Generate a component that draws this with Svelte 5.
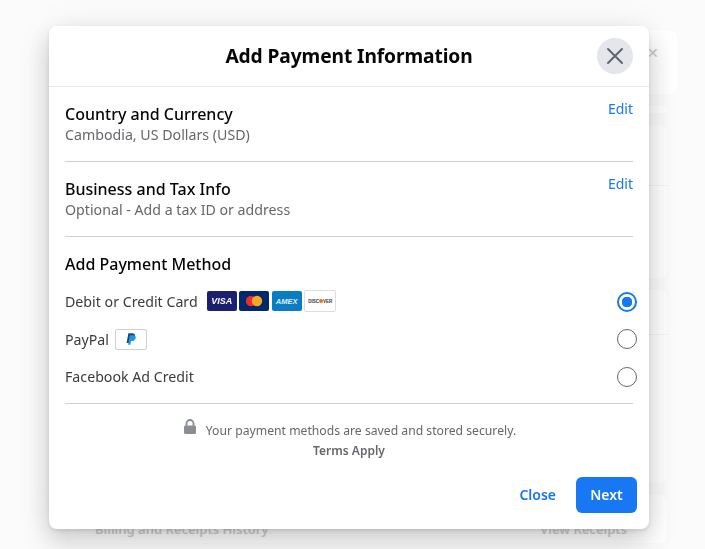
<script>
    const methods = [
        { id: "card", label: "Debit or Credit Card", kind: "cards" },
        { id: "paypal", label: "PayPal", kind: "paypal" },
        { id: "credit", label: "Facebook Ad Credit", kind: "" }
    ];
    let selected = $state("card");
</script>

<div class="page">
    <div class="notice"><span class="notice-x">✕</span></div>
    <div class="bg-card short"></div>
    <div class="bg-card first"><div class="bg-line"></div></div>
    <div class="bg-card second"><div class="bg-line"></div></div>
    <div class="bg-card last">
        <span>Billing and Receipts History</span>
        <span>View Receipts</span>
    </div>
</div>

<div class="overlay">
    <div class="dialog">
        <header>
            <h1>Add Payment Information</h1>
            <button class="close-x" aria-label="Close">
                <svg width="20" height="20" viewBox="0 0 20 20">
                    <path d="M3 3 L17 17 M17 3 L3 17" stroke="#606770" stroke-width="2" stroke-linecap="round" />
                </svg>
            </button>
        </header>

        <section class="info">
            <div>
                <h2>Country and Currency</h2>
                <p>Cambodia, US Dollars (USD)</p>
            </div>
            <a href="#edit">Edit</a>
        </section>

        <section class="info">
            <div>
                <h2>Business and Tax Info</h2>
                <p>Optional - Add a tax ID or address</p>
            </div>
            <a href="#edit">Edit</a>
        </section>

        <section class="methods">
            <h2>Add Payment Method</h2>
            {#each methods as m}
                <label class="method">
                    <span class="method-name">{m.label}</span>
                    {#if m.kind === "cards"}
                        <span class="logos">
                            <span class="logo visa">VISA</span>
                            <span class="logo mc">
                                <svg width="18" height="12" viewBox="0 0 18 12">
                                    <circle cx="6" cy="6" r="5.2" fill="#eb2d2f" />
                                    <circle cx="12" cy="6" r="5.2" fill="#f7a823" />
                                </svg>
                            </span>
                            <span class="logo amex">AMEX</span>
                            <span class="logo discover">DISC<i></i>VER</span>
                        </span>
                    {:else if m.kind === "paypal"}
                        <span class="logo paypal">
                            <svg width="10" height="12" viewBox="0 0 10 12">
                                <path d="M2.4 0.3 H6.2 C8.4 0.3 9.2 1.5 8.9 3.1 C8.5 5.2 7 6.3 5 6.3 H3.7 L3 10 H0.6 Z" fill="#253b80" />
                                <path d="M3.6 2.2 H7 C9 2.2 10 3.3 9.7 4.9 C9.3 7 7.8 8 5.8 8 H5 L4.4 11.7 H2.2 Z" fill="#179bd7" />
                            </svg>
                        </span>
                    {/if}
                    <input type="radio" name="method" value={m.id} bind:group={selected} />
                    <span class="radio" class:on={selected === m.id}></span>
                </label>
            {/each}
        </section>

        <div class="secure">
            <div class="secure-line">
                <svg class="lock" width="14" height="16" viewBox="0 0 14 16">
                    <path d="M3.5 7 V4.5 a3.5 3.5 0 0 1 7 0 V7" fill="none" stroke="#8a8d91" stroke-width="1.8" />
                    <rect x="1" y="6.5" width="12" height="8.5" rx="1.5" fill="#8a8d91" />
                </svg>
                <span>Your payment methods are saved and stored securely.</span>
            </div>
            <a href="#terms">Terms Apply</a>
        </div>

        <footer>
            <button class="text-btn">Close</button>
            <button class="next">Next</button>
        </footer>
    </div>
</div>

<style>
    :global(body) {
        margin: 0;
        background: #fbfbfb;
        overflow: hidden;
    }
    .page {
        width: 705px;
        height: 549px;
        box-sizing: border-box;
        padding: 30px 28px 0 70px;
        display: flex;
        flex-direction: column;
        overflow: hidden;
        font-family: "Noto Sans", sans-serif;
    }
    .notice {
        height: 64px;
        flex: none;
        background: #fff;
        border-radius: 8px;
        display: flex;
        justify-content: flex-end;
        align-items: center;
        padding: 0 18px 20px 0;
        box-sizing: border-box;
    }
    .notice-x {
        color: #c8c8c8;
        font-size: 14px;
    }
    .bg-card {
        flex: none;
        width: 597px;
        background: #fff;
        border-radius: 8px;
        margin-top: 12px;
        box-sizing: border-box;
    }
    .short {
        height: 7px;
        margin-top: 12px;
    }
    .first {
        height: 153px;
    }
    .second {
        height: 193px;
    }
    .bg-line {
        height: 1px;
        background: #f4f4f4;
        margin-top: 60px;
    }
    .second .bg-line {
        margin-top: 44px;
    }
    .last {
        height: 48px;
        display: flex;
        justify-content: space-between;
        align-items: flex-end;
        padding: 0 40px 5px 25px;
        color: #d0d0d0;
        font-size: 13px;
        font-weight: 600;
    }
    .overlay {
        position: fixed;
        inset: 0;
        padding: 26px 0 0 49px;
        box-sizing: border-box;
    }
    .dialog {
        width: 600px;
        height: 503px;
        background: #fff;
        border-radius: 8px;
        box-shadow: 0 12px 28px rgba(0, 0, 0, 0.2), 0 2px 4px rgba(0, 0, 0, 0.1), 0 0 40px rgba(0, 0, 0, 0.05);
        font-family: "Noto Sans", sans-serif;
        display: flex;
        flex-direction: column;
        color: #050505;
    }
    header {
        height: 61px;
        flex: none;
        box-sizing: border-box;
        border-bottom: 1px solid #e4e6eb;
        padding-bottom: 2px;
        display: flex;
        align-items: center;
        justify-content: center;
        position: relative;
    }
    h1 {
        margin: 0;
        font-size: 19.2px;
        font-weight: 700;
        letter-spacing: -0.1px;
    }
    .close-x {
        position: absolute;
        right: 16px;
        top: 12px;
        width: 36px;
        height: 36px;
        border-radius: 50%;
        border: none;
        background: #e4e6eb;
        padding: 0;
        display: flex;
        align-items: center;
        justify-content: center;
    }
    .info {
        margin: 0 16px;
        height: 75px;
        flex: none;
        box-sizing: border-box;
        padding-top: 16px;
        border-bottom: 1px solid #ced0d4;
        display: flex;
        justify-content: space-between;
        align-items: flex-start;
    }
    .info a {
        color: #1877f2;
        font-size: 14px;
        text-decoration: none;
        line-height: 16px;
        margin-top: -2px;
    }
    h2 {
        margin: 0;
        font-size: 16px;
        font-weight: 500;
        line-height: 23px;
    }
    .info p {
        margin: 0;
        font-size: 14.2px;
        line-height: 18px;
        color: #65676b;
    }
    .methods {
        margin: 0 16px;
        padding-top: 16px;
        height: 167px;
        flex: none;
        box-sizing: border-box;
        border-bottom: 1px solid #ced0d4;
    }
    .methods h2 {
        margin-bottom: 7px;
    }
    .method {
        height: 37.5px;
        display: flex;
        align-items: center;
        position: relative;
        margin-right: -4px;
        font-size: 14.2px;
        color: #3a3b3c;
    }
    .method input {
        position: absolute;
        opacity: 0;
        right: 0;
        margin: 0;
    }
    .logos {
        display: flex;
        gap: 2.5px;
        margin-left: 9px;
    }
    .logo {
        width: 30px;
        height: 20px;
        border-radius: 2px;
        box-sizing: border-box;
        display: flex;
        align-items: center;
        justify-content: center;
        font-family: "Liberation Sans", sans-serif;
    }
    .visa {
        background: #1a1f71;
        color: #fff;
        font-size: 9px;
        font-weight: 700;
        font-style: italic;
    }
    .mc {
        background: #00296b;
    }
    .amex {
        background: #0a7cc4;
        color: #dff1fb;
        font-size: 7.5px;
        font-weight: 700;
        font-style: italic;
    }
    .discover {
        width: 32px;
        height: 22px;
        margin-top: -1px;
        background: #fff;
        border: 1px solid #dcdee3;
        color: #333;
        font-size: 4.5px;
        font-weight: 700;
    }
    .discover i {
        width: 4px;
        height: 4px;
        border-radius: 50%;
        background: #f2711c;
    }
    .paypal {
        width: 32px;
        height: 21px;
        margin-left: 6px;
        background: #fff;
        border: 1px solid #ced0d4;
    }
    .radio {
        margin-left: auto;
        width: 20px;
        height: 20px;
        box-sizing: border-box;
        border-radius: 50%;
        border: 1.5px solid #65676b;
    }
    .radio.on {
        border: 2px solid #1877f2;
        background: radial-gradient(circle, #1877f2 0 5px, #fff 5.5px);
    }
    .secure {
        display: flex;
        flex-direction: column;
        align-items: center;
        padding-top: 15px;
        font-size: 12.2px;
        color: #65676b;
    }
    .secure-line {
        display: flex;
        align-items: flex-start;
        gap: 9px;
        line-height: 20px;
        padding-left: 1px;
    }
    .secure-line span {
        margin-top: 2px;
    }
    .secure a {
        color: #65676b;
        font-weight: 600;
        text-decoration: none;
        line-height: 20px;
        font-size: 12px;
    }
    footer {
        margin-top: auto;
        padding: 0 12px 16px 0;
        display: flex;
        justify-content: flex-end;
        align-items: center;
        gap: 20px;
    }
    footer button {
        font-family: inherit;
        font-size: 14px;
        font-weight: 600;
        border: none;
        height: 36px;
        padding: 0 0 2px;
    }
    .text-btn {
        background: none;
        color: #1877f2;
    }
    .next {
        width: 61px;
        border-radius: 6px;
        background: #1877f2;
        color: #fff;
    }
</style>
